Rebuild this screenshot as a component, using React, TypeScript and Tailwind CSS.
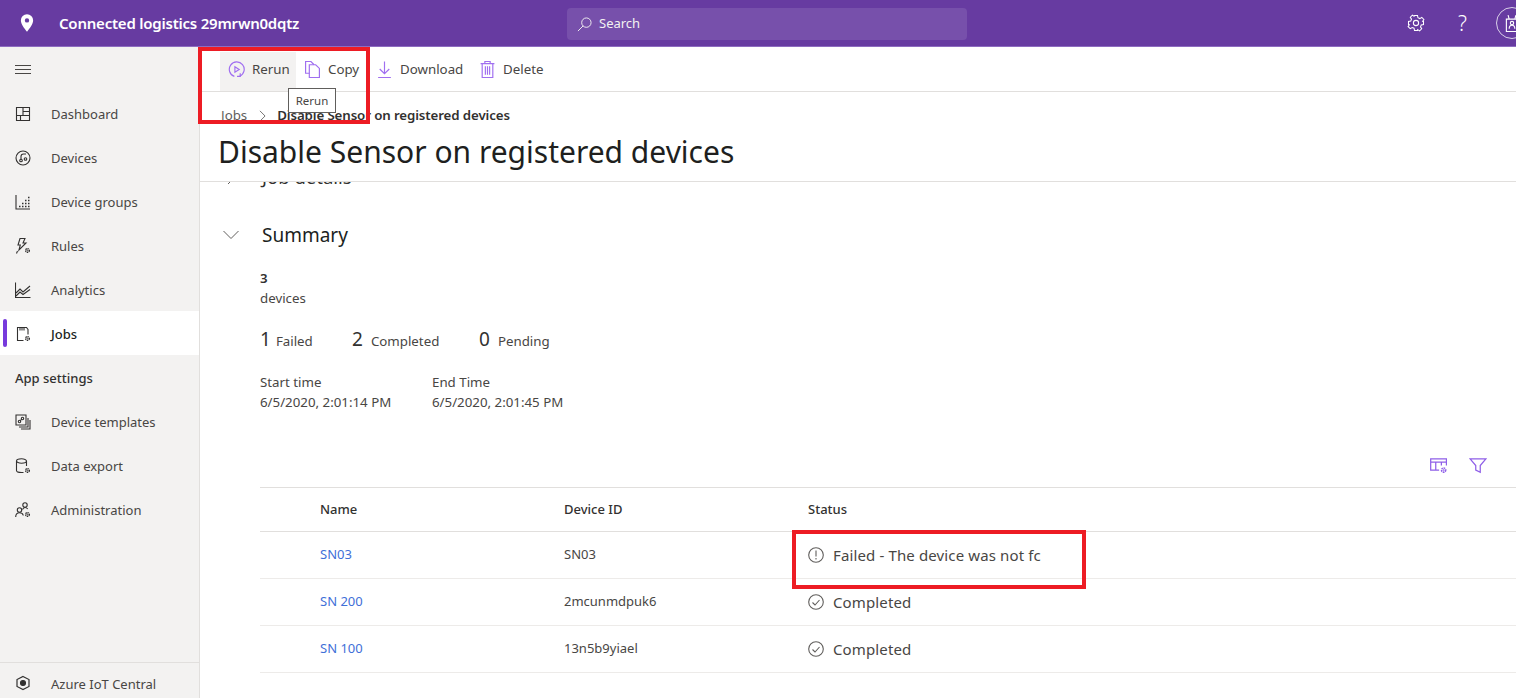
import type { ReactNode } from 'react';

const font = { fontFamily: '"Noto Sans", "Open Sans", sans-serif' };

function Svg({ children, className }: { children: ReactNode; className?: string }) {
  return (
    <svg viewBox="0 0 16 16" fill="none" stroke="currentColor" strokeWidth="1.1" className={className}>
      {children}
    </svg>
  );
}

const Gear = ({ x, y }: { x: number; y: number }) => (
  <>
    <circle cx={x} cy={y} r="1.9" strokeWidth="1.3" strokeDasharray="1.4 0.6" />
    <circle cx={x} cy={y} r="0.6" strokeWidth="0.7" />
  </>
);

const navIcons: Record<string, ReactNode> = {
  Dashboard: (
    <>
      <path d="M1.500 1.500h13v13h-13z" />
      <path d="M8 1.500v8M8 5.500h6.500M1.500 9.500h13M5.500 9.500v5" />
    </>
  ),
  Devices: (
    <>
      <circle cx="8" cy="8" r="7" />
      <circle cx="6" cy="10.500" r="1.300" />
      <circle cx="10.500" cy="9" r="1.300" />
      <path d="M6 9.200V6.500C6 4.800 7.200 4 8.500 4H11" />
    </>
  ),
  'Device groups': (
    <>
      <path d="M1 1v14h14" />
      <path d="M4 12.500h1.500M7 12.500h1.500M10 12.500h1.500M13 12.500h1.500M7 9.500h1.500M10 9.500h1.500M13 9.500h1.500M10 6.500h1.500M13 6.500h1.500M13 3.500h1.500" strokeWidth="1.700" />
    </>
  ),
  Rules: (
    <>
      <path d="M5 .5h5L8 5h3L4 12l1.300-5H3z" />
      <path d="M2.500 13L1.500 15.500" />
      <Gear x={12.500} y={12.500} />
    </>
  ),
  Analytics: (
    <>
      <path d="M.5 .5v15h15" />
      <path d="M1 11l4-4 3 3 7-6M1 14l4-4 3 2.500 7-5" />
    </>
  ),
  Jobs: (
    <>
      <path d="M8.500 14.500h-6v-13h9l1.500 2v5" />
      <path d="M5 1.500v3M7 1.500v3M9 1.500v3" />
      <Gear x={12.500} y={12.500} />
    </>
  ),
  'Device templates': (
    <>
      <path d="M1 1h10v10H1z" />
      <path d="M13 4v9H4M15 6v9H6" />
      <circle cx="4.500" cy="7.500" r="1.200" />
      <circle cx="7.500" cy="4.500" r="1.200" />
      <path d="M5.300 6.500l1.400-1.200" />
    </>
  ),
  'Data export': (
    <>
      <ellipse cx="6.500" cy="3" rx="5" ry="2.200" />
      <path d="M1.500 3v9.500c0 1 1.600 2 5 2h2M11.500 3v5" />
      <Gear x={12.500} y={12.500} />
    </>
  ),
  Administration: (
    <>
      <circle cx="10" cy="3" r="2.200" />
      <circle cx="4.500" cy="8" r="2.200" />
      <path d="M.7 15c0-2.500 1.600-4.300 3.800-4.300S8 12 8.300 13.500M7.500 7.500c.5-1 1.500-2 2.500-2s2 .5 2.700 1.500" />
      <Gear x={12.500} y={12.500} />
    </>
  ),
};

const navTop = ['Dashboard', 'Devices', 'Device groups', 'Rules', 'Analytics', 'Jobs'];
const navBottom = ['Device templates', 'Data export', 'Administration'];

function NavItem({ label }: { label: string }) {
  const active = label === 'Jobs';
  return (
    <div className={`relative flex h-11 items-center pl-[15px] ${active ? 'bg-white font-medium text-[#201f1e]' : 'text-[#484644]'}`}>
      {active && <span className="absolute left-[3px] top-[8px] h-[28px] w-1 rounded-sm bg-[#773adc]" />}
      <Svg className="mt-[2px] h-4 w-4 shrink-0 text-[#323130]">{navIcons[label]}</Svg>
      <span className="ml-[20px] pt-[4px] text-[13px]">{label}</span>
    </div>
  );
}

function Sidebar() {
  return (
    <aside className="flex w-[200px] shrink-0 flex-col border-r border-[#e1dfdd] bg-[#f3f2f1]">
      <div className="flex h-11 shrink-0 items-center pl-[15px] pt-[2px]">
        <svg viewBox="0 0 16 10" className="h-[10px] w-4 text-[#484644]" fill="none" stroke="currentColor">
          <path d="M0 .5h16M0 4.500h16M0 8.500h16" />
        </svg>
      </div>
      {navTop.map((n) => (
        <NavItem key={n} label={n} />
      ))}
      <div className="flex h-11 items-center pl-[15px] pt-[4px] text-[13px] font-medium text-[#323130]">App settings</div>
      {navBottom.map((n) => (
        <NavItem key={n} label={n} />
      ))}
      <div className="mt-auto flex h-[36px] items-start border-t border-[#e1dfdd] pl-[15px] pt-[12px] text-[#484644]">
        <Svg className="h-4 w-4 text-[#323130]">
          <path d="M8 1.500l6 3v7l-6 3-6-3v-7z" strokeWidth="1.200" />
          <circle cx="8" cy="8" r="2.500" fill="currentColor" />
        </Svg>
        <span className="-mt-[1px] ml-[20px] text-[13px] leading-[20px]">Azure IoT Central</span>
      </div>
    </aside>
  );
}

function Header() {
  return (
    <header className="relative flex h-[47px] shrink-0 items-center border-b border-[#8d6cc0] bg-[#673ba1] text-white">
      <svg viewBox="0 0 16 20" className="ml-[20px] h-[20px] w-[14px]" fill="currentColor">
        <path fillRule="evenodd" d="M8 0a7 7 0 0 1 7 7c0 4-4 9-7 13C5 16 1 11 1 7a7 7 0 0 1 7-7zm0 4.500a2.500 2.500 0 1 0 0 5 2.500 2.500 0 0 0 0-5z" />
      </svg>
      <span className="ml-[25px] pt-[1px] text-[15px] font-semibold tracking-[-0.22px]">Connected logistics 29mrwn0dqtz</span>
      <div className="absolute left-[567px] top-[8px] flex h-[32px] w-[400px] items-center rounded-sm bg-[#7750ab] pl-[10px] text-[#f3f2f1]">
        <svg viewBox="0 0 16 16" className="h-[15px] w-[15px]" fill="none" stroke="currentColor">
          <circle cx="10" cy="6" r="5" />
          <path d="M6.500 9.500L1 15" />
        </svg>
        <span className="ml-[7px] text-[13px]">Search</span>
      </div>
      <div className="ml-auto flex items-center">
        <svg viewBox="0 0 24 24" className="h-[18px] w-[18px]" fill="none" stroke="currentColor" strokeWidth="1.400">
          <path d="M10 2h4l.6 3 2.500 1.100 2.600-1.600 2.800 2.800-1.600 2.600L22 10v4l-3 .6-1 2.500 1.600 2.600-2.800 2.800-2.600-1.600L14 22h-4l-.6-3-2.500-1-2.600 1.600-2.800-2.800 1.600-2.600L2 14v-4l3-.6 1-2.500L4.400 4.300l2.800-2.800 2.200 1.500z" />
          <circle cx="12" cy="12" r="3.500" />
        </svg>
        <span className="ml-[30px] w-[15px] text-center text-[21px] font-light leading-none">?</span>
        <div className="ml-[26px] mr-[-12px] flex h-[32px] w-[32px] items-center justify-center rounded-full border border-[#d9cfe8]">
          <svg viewBox="0 0 16 16" className="h-[18px] w-[18px]" fill="none" stroke="currentColor">
            <path d="M3 4.500h10v11H3zM5.500 4.500L4.500 1M10.500 4.500L11.500 1" />
            <circle cx="8" cy="8" r="1.500" />
            <path d="M5.500 13c0-2 1-3 2.500-3s2.500 1 2.500 3" />
          </svg>
        </div>
      </div>
    </header>
  );
}

function ToolButton({ icon, label, className }: { icon: ReactNode; label: string; className?: string }) {
  return (
    <div className={`flex items-center pb-[4px] ${className ?? ''}`}>
      <Svg className="h-[17px] w-[17px] text-[#a06ff0]">{icon}</Svg>
      <span className="ml-[7px] text-[13.300px] text-[#484644]">{label}</span>
    </div>
  );
}

function Toolbar() {
  return (
    <div className="flex h-[45px] shrink-0 items-end border-b border-[#e1dfdd] pl-[20px]">
      <ToolButton
        className="h-[39px] w-[76px] bg-[#f3f2f1] pl-2"
        label="Rerun"
        icon={
          <>
            <path d="M6 14.500A7 7 0 1 1 11 14.300" />
            <path d="M6.500 5.500l4 2.500-4 2.500z" />
            <path d="M11.500 11.500v3h-3" />
          </>
        }
      />
      <ToolButton
        className="ml-[8px] h-[39px] w-[72px]"
        label="Copy"
        icon={
          <>
            <path d="M5 11.500H1.500v-11h5l3 3" />
            <path d="M5 3.500h6l3.500 3.500v8.500H5z" />
          </>
        }
      />
      <ToolButton
        className="h-[39px] w-[103px]"
        label="Download"
        icon={<path d="M8 .5v11M3.500 7.500l4.500 4.500 4.500-4.500M2 15.500h12" />}
      />
      <ToolButton
        className="h-[39px]"
        label="Delete"
        icon={
          <>
            <path d="M1.500 2.500h13M5.500 2.500v-2h5v2M3 2.500v13h10v-13M6 5v8M8 5v8M10 5v8" />
          </>
        }
      />
    </div>
  );
}

function Stat({ n, label, className, gap }: { n: number; label: string; className?: string; gap?: string }) {
  return (
    <div className={`flex items-baseline ${className ?? ''}`}>
      <span className="text-[19px] text-[#323130]">{n}</span>
      <span className={`${gap ?? 'ml-2'} text-[13.300px] text-[#484644]`}>{label}</span>
    </div>
  );
}

const CircleIcon = ({ failed }: { failed?: boolean }) => (
  <Svg className="h-4 w-4 shrink-0 text-[#605e5c]">
    <circle cx="8" cy="8" r="7.300" />
    {failed ? <path d="M8 3.500v6M8 11v1.500" /> : <path d="M4.500 8.500l2.500 2.500 4.500-5" />}
  </Svg>
);

const rows = [
  { name: 'SN03', id: 'SN03', status: 'Failed - The device was not fc', failed: true },
  { name: 'SN 200', id: '2mcunmdpuk6', status: 'Completed', failed: false },
  { name: 'SN 100', id: '13n5b9yiael', status: 'Completed', failed: false },
];

function JobTable() {
  return (
    <div className="ml-[60px] mt-[13px] text-[13px]">
      <div className="flex h-[45px] items-center border-y border-[#e1dfdd] font-medium text-[#323130]">
        <div className="ml-[60px] w-[244px]">Name</div>
        <div className="w-[244px]">Device ID</div>
        <div>Status</div>
      </div>
      {rows.map((r) => (
        <div key={r.name} className="flex h-[47px] items-center border-b border-[#edebe9] text-[#484644]">
          <div className="ml-[60px] w-[244px] text-[#3f6fd8]">{r.name}</div>
          <div className="w-[244px]">{r.id}</div>
          <div className="flex items-center text-[15px] tracking-[0.13px]">
            <CircleIcon failed={r.failed} />
            <span className="ml-[9px]">{r.status}</span>
          </div>
        </div>
      ))}
    </div>
  );
}

function Content() {
  return (
    <div className="min-h-0 flex-1 overflow-hidden">
      <div className="-mt-[14px] flex h-[18px] items-center pl-[23px]">
        <svg viewBox="0 0 16 16" className="h-4 w-4 text-[#605e5c]" fill="none" stroke="currentColor">
          <path d="M5 1l7 7-7 7" />
        </svg>
        <span className="ml-[23px] text-[18.500px] leading-none text-[#323130]">Job details</span>
      </div>
      <div className="mt-[35px] flex h-[28px] items-center pl-[23px]">
        <svg viewBox="0 0 16 10" className="h-[10px] w-4 text-[#605e5c]" fill="none" stroke="currentColor">
          <path d="M.5 1l7.500 7.500L15.500 1" />
        </svg>
        <span className="ml-[23px] text-[19px] text-[#201f1e]">Summary</span>
      </div>
      <div className="ml-[60px] mt-[19px] text-[13.300px] text-[#484644]">
        <div className="font-semibold leading-[20px] text-[#323130]">3</div>
        <div className="leading-[20px]">devices</div>
        <div className="mt-[17px] flex h-[28px] items-baseline">
          <Stat n={1} label="Failed" className="w-[92px]" gap="ml-[5px]" />
          <Stat n={2} label="Completed" className="w-[127px]" />
          <Stat n={0} label="Pending" gap="ml-[8px]" />
        </div>
        <div className="mt-[19px] flex">
          <div className="w-[172px] leading-[20px]">
            <div>Start time</div>
            <div>6/5/2020, 2:01:14 PM</div>
          </div>
          <div className="leading-[20px]">
            <div>End Time</div>
            <div>6/5/2020, 2:01:45 PM</div>
          </div>
        </div>
      </div>
      <div className="mt-[44px] flex h-[18px] items-center justify-end pr-[29px] text-[#8f5fe8]">
        <Svg className="h-[18px] w-[18px]">
          <path d="M9 12.500H1.500v-10h14v6M1.500 5.500h14M6 5.500v7M11 5.500v3" />
          <Gear x={13} y={12.500} />
        </Svg>
        <Svg className="ml-[22px] h-[18px] w-[18px]">
          <path d="M1 2.500h14l-5 6v6l-4-2v-4z" />
        </Svg>
      </div>
      <JobTable />
    </div>
  );
}

export default function App() {
  return (
    <div className="relative flex h-[698px] w-[1516px] flex-col overflow-hidden bg-white" style={font}>
      <Header />
      <div className="flex min-h-0 flex-1">
        <Sidebar />
        <main className="flex min-w-0 flex-1 flex-col">
          <Toolbar />
          <div className="h-[90px] shrink-0 border-b border-[#e1dfdd] pl-[20px]">
            <div className="flex h-[46px] items-center pl-[1px] pt-[1px] text-[13.300px]">
              <span className="text-[#605e5c]">Jobs</span>
              <svg viewBox="0 0 8 14" className="ml-[12px] h-[12px] w-[7px] text-[#605e5c]" fill="none" stroke="currentColor">
                <path d="M1 1l6 6-6 6" />
              </svg>
              <span className="ml-[11px] font-semibold tracking-[-0.12px] text-[#323130]">Disable Sensor on registered devices</span>
            </div>
            <h1 className="-ml-[2px] -mt-[8px] text-[30px] font-normal leading-[44px] text-[#201f1e]">Disable Sensor on registered devices</h1>
          </div>
          <Content />
        </main>
      </div>
      <div className="absolute left-[198px] top-[47px] h-[77px] w-[172px] border-[4px] border-[#ed1c24]" />
      <div className="absolute left-[792px] top-[530px] h-[59px] w-[294px] border-[4px] border-[#ed1c24]" />
      <div className="absolute left-[288px] top-[88px] flex h-[25px] w-[48px] items-center justify-center border border-[#605e5c] bg-white text-[11.500px] text-[#484644]">
        Rerun
      </div>
    </div>
  );
}
